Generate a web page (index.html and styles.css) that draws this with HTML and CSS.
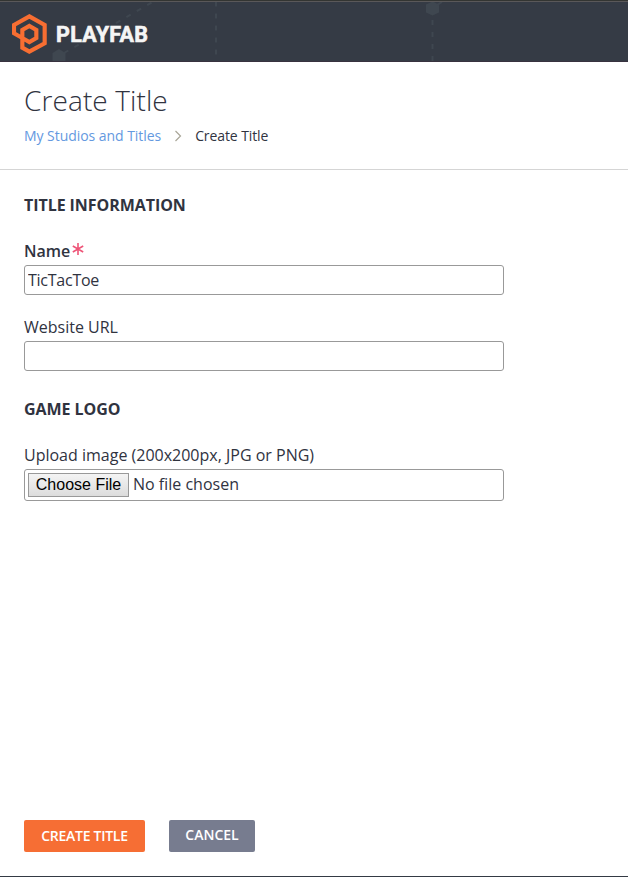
FILE: index.html
```html
<!DOCTYPE html>
<html lang="en">
<head>
<meta charset="utf-8">
<title>Create Title</title>
<link rel="stylesheet" href="styles.css">
</head>
<body>
<header class="topbar">
  <svg class="pattern" width="628" height="59" viewBox="0 2 628 59" fill="none" stroke="#3f4750" stroke-width="2">
    <path d="M216 1V61" stroke-dasharray="5 7" stroke-dashoffset="-.5"/>
    <path d="M432.5 20V61" stroke-dasharray="5 7"/>
    <path d="M64 53L156 0" stroke-dasharray="5 7"/>
    <path d="M59 49l6.500 4v8h-13v-8zM432.500 1.500l6.500 3v8l-6.500 3-6.500-3v-8z" fill="#3f4750" stroke="none"/>
    <path d="M437 5l5-3"/>
  </svg>
  <svg class="logo" width="36" height="42" viewBox="36 39 108 126" fill="none" stroke="#f76e32" stroke-width="12.500">
    <path d="M88 49L134 75V130L88 155L67 143V90L88 78L109 90V114L88 126L67 114L42 100V75Z"/>
  </svg>
  <svg class="wordmark" width="94" height="28" viewBox="0 0 94 28">
    <text x="0" y="21" textLength="92" lengthAdjust="spacing">PLAYFAB</text>
  </svg>
</header>
<section class="page-head">
  <h1>Create Title</h1>
  <nav class="crumbs">
    <a>My Studios and Titles</a>
    <svg width="8" height="12" viewBox="0 0 8 12" fill="none" stroke="#a9a698" stroke-width="1.200"><path d="M1.500 1L6.500 6L1.500 11"/></svg>
    <span>Create Title</span>
  </nav>
</section>
<main class="form">
  <h2>TITLE INFORMATION</h2>
  <div class="field">
    <label class="strong" for="name">Name<svg width="12" height="12" viewBox="0 0 12 12" stroke="#ee5578" stroke-width="1.600"><path d="M6 0V12M.8 3L11.200 9M.8 9L11.200 3"/></svg></label>
    <input id="name" class="box tight" type="text" value="TicTacToe">
  </div>
  <div class="field">
    <label for="url">Website URL</label>
    <input id="url" class="box" type="text">
  </div>
  <h2>GAME LOGO</h2>
  <div class="field">
    <label>Upload image (200x200px, JPG or PNG)</label>
    <div class="box file"><button class="choose">Choose File</button><span>No file chosen</span></div>
  </div>
</main>
<footer class="actions">
  <button class="btn primary">CREATE TITLE</button>
  <button class="btn secondary"><span>CANCEL</span></button>
</footer>
</body>
</html>
```

FILE: styles.css
```css
* { box-sizing: border-box; }
body {
  margin: 0;
  height: 877px;
  display: flex;
  flex-direction: column;
  overflow: hidden;
  background: #fff;
  border-bottom: 1px solid #343a44;
  color: #30333f;
  font: 16px/24px "Open Sans", sans-serif;
}
.topbar {
  position: relative;
  height: 62px;
  flex: none;
  display: flex;
  align-items: flex-start;
  background: linear-gradient(#333532 0 1px, #5a5859 1px 2px, #353b45 2px 61px, #38323f 61px);
}
.pattern { position: absolute; left: 0; top: 2px; }
.logo { position: relative; margin: 13px 0 0 12px; }
.wordmark { position: relative; margin: 21px 0 0 8px; }
.wordmark text {
  font-family: Roboto, sans-serif;
  font-size: 21.500px;
  font-weight: 700;
  fill: #f5f5f5;
  stroke: #f5f5f5;
  stroke-width: .6px;
}
.page-head {
  height: 108px;
  flex: none;
  padding: 18px 24px 0;
  border-bottom: 1px solid #d5d5d5;
}
h1 {
  margin: 0;
  font-size: 28px;
  line-height: 40px;
  font-weight: 300;
  letter-spacing: .1px;
}
.crumbs {
  display: flex;
  align-items: center;
  margin-top: 4px;
  font-size: 14px;
  line-height: 24px;
  letter-spacing: -.05px;
}
.crumbs a { color: #6499df; }
.crumbs span { letter-spacing: -.1px; }
.crumbs svg { margin: 0 13px; }
.form { flex: 1; padding: 23px 24px 0; }
h2 {
  margin: 0 0 22px;
  font-size: 16px;
  line-height: 24px;
  font-weight: 700;
  letter-spacing: -.06px;
}
.field { width: 480px; margin-bottom: 20px; }
.field + h2 { margin-top: 26px; }
label { display: block; height: 26px; line-height: 24px; }
.strong { font-weight: 600; }
.strong svg { margin-left: 2px; vertical-align: 2px; }
.box {
  display: block;
  width: 480px;
  height: 30px;
  padding: 0 3px;
  border: 1px solid #999;
  border-radius: 3px;
  background: #fff;
  color: #30333f;
  font: inherit;
  outline: 0;
}
.tight { letter-spacing: -.25px; }
.file {
  display: flex;
  align-items: center;
  gap: 4px;
  height: 32px;
}
.file span { padding-bottom: 2px; }
.choose {
  width: 101px;
  height: 24px;
  padding: 0;
  border: 1px solid #999;
  background: linear-gradient(#f4f4f4, #dcdcdc);
  color: #000;
  font: 16px/20px "Liberation Sans", sans-serif;
}
.actions { display: flex; gap: 24px; padding: 0 24px 24px; }
.btn {
  height: 32px;
  padding: 0;
  border: 0;
  border-radius: 2px;
  color: #fff;
  font: 600 14px/32px "Open Sans", sans-serif;
}
.primary { width: 121px; background: #f66e34; letter-spacing: -.27px; }
.secondary { width: 86px; background: #777c8f; }
.secondary span { display: block; margin-top: -2px; }
```
